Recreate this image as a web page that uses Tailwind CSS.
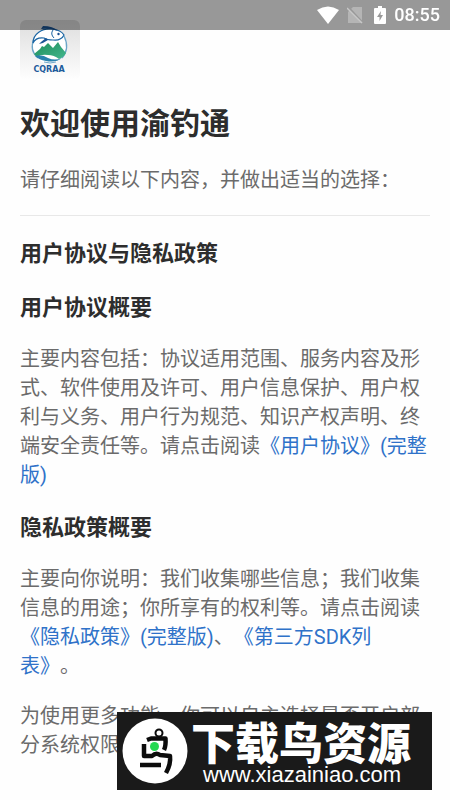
<!DOCTYPE html>
<html lang="zh-CN">
<head>
<meta charset="utf-8">
<meta name="viewport" content="width=device-width, initial-scale=1">
<title>渝钓通</title>
<script src="https://cdn.jsdelivr.net/npm/@tailwindcss/browser@4"></script>
</head>
<body class="min-h-screen bg-[#fefefe] font-[Roboto,'Noto_Sans_CJK_SC',sans-serif] text-[20px] leading-[29px] text-[#6b6b6b] [text-spacing-trim:space-all]">
<header class="fixed inset-x-0 top-0 z-10 flex h-[30px] items-center justify-end bg-black/40 pr-[10px] text-white">
  <svg class="mr-[8px] h-[18px] w-[22px]" viewBox="0 0 22 18" fill="currentColor" aria-hidden="true"><path d="M0 4Q11-3 22 4L11 18Z"/></svg>
  <svg class="mr-[11px] h-[18px] w-[16px]" viewBox="0 0 16 18" aria-hidden="true"><path d="M6 1h9v16H1V6Z" fill="#b5b5b5"/><path d="M1 1l14 15" stroke="#999" stroke-width="2"/><path d="M0 2l15 15" stroke="#c8c8c8" stroke-width="1.5"/></svg>
  <svg class="mr-[8px] h-[18px] w-[12px]" viewBox="0 0 12 18" aria-hidden="true"><path d="M4 0h4v2h3q1 0 1 1v14q0 1-1 1H1q-1 0-1-1V3q0-1 1-1h3Z" fill="currentColor"/><path d="M7 5L3 11h2.500v4L9 9H6.500Z" fill="#999"/></svg>
  <time class="text-[18px] leading-[30px] font-medium">08:55</time>
</header>
<main class="px-5 pt-5 pb-10">
  <svg class="size-[60px]" viewBox="0 0 60 60" role="img" aria-label="CQRAA">
    <defs>
      <linearGradient id="tile" x2="0" y2="1"><stop stop-color="#dedede"/><stop offset="1" stop-color="#fefefe"/></linearGradient>
      <linearGradient id="hill" x2="1" y2="1"><stop stop-color="#1e8d59"/><stop offset="1" stop-color="#42b68d"/></linearGradient>
    </defs>
    <rect width="60" height="60" rx="6" fill="url(#tile)"/>
    <circle cx="29.500" cy="26" r="17.500" fill="#fff"/>
    <path d="M14 19C11 26 12 33 18 38M44 16C48 24 47 32 42 38" fill="none" stroke="#6ba5c8" stroke-width="1.300"/>
    <path d="M14 34L20 29L22 26L24 27L28 23L33 28L38 22L41 27L46 33Q44 37 39 39Q34 35 28 35Q21 34 17 37Z" fill="url(#hill)"/>
    <path d="M15 36Q22 34 28 38Q35 41 42 38Q36 43 26 41Q19 40 15 36Z" fill="#2a82ae"/>
    <path d="M24 42Q30 44 36 42" fill="none" stroke="#6ba5c8"/>
    <path d="M13 23C13 14 22 8 32 9Q41 10 44 15Q41 21 33 20Q27 20 24 18Q16 17 13 23Z" fill="#fff" stroke="#1b65a3" stroke-width="1.200"/>
    <path d="M21 9L23 6Q33 6 38 11Q29 8 21 9ZM21 22L26 18L28 20Q24 23 19 24Z" fill="#1b5596"/>
    <path d="M33 10Q30 14 34 18" fill="none" stroke="#1b65a3"/>
    <circle cx="38.500" cy="14" r="1.200" fill="#1b4f8f"/>
    <text x="29" y="52" text-anchor="middle" font-family="DejaVu Sans" font-size="8" font-weight="bold" fill="#1d5b9b">CQRAA</text>
  </svg>
  <h1 class="mt-6 text-[30px] leading-[40px] font-bold text-[#2d2d2d]">欢迎使用渝钓通</h1>
  <p class="mt-[22px]">请仔细阅读以下内容，并做出适当的选择：</p>
  <hr class="mt-5 border-[#e8e8e8]">
  <section class="mt-[22px]">
    <h2 class="text-[22px] leading-8 font-bold text-[#2d2d2d]">用户协议与隐私政策</h2>
    <h3 class="mt-[22px] text-[22px] leading-8 font-bold text-[#2d2d2d]">用户协议概要</h3>
    <p class="mt-[21px]">主要内容包括：协议适用范围、服务内容及形式、软件使用及许可、用户信息保护、用户权利与义务、用户行为规范、知识产权声明、终端安全责任等。请点击阅读<a href="#" class="text-[#2f72c9]">《用户协议》(完整版)</a></p>
    <h3 class="mt-[22px] text-[22px] leading-8 font-bold text-[#2d2d2d]">隐私政策概要</h3>
    <p class="mt-[21px]">主要向你说明：我们收集哪些信息；我们收集信息的用途；你所享有的权利等。请点击阅读<a href="#" class="text-[#2f72c9]">《隐私政策》(完整版)</a>、<a href="#" class="text-[#2f72c9]">《第三方SDK列表》</a>。</p>
    <p class="mt-[21px]">为使用更多功能，你可以自主选择是否开启部分系统权限</p>
  </section>
</main>
<aside class="fixed right-[18px] bottom-[10px] flex h-[78px] w-[315px] items-center bg-[#1a1a1a] pl-[5px] text-white">
  <svg class="size-[66px] shrink-0" viewBox="0 0 66 66" aria-hidden="true">
    <circle cx="33" cy="33" r="32.500" fill="#fff"/>
    <g fill="none" stroke="#0c0c0c" stroke-width="4.500" stroke-linejoin="round">
      <circle cx="37" cy="15" r="3.500" stroke-width="2"/>
      <path d="M25 22L29 20.500H43.500Q44 28 42 32M22 26V38H30Q34 34 38 37L48 38Q49 46 44 55M18 47H39"/>
    </g>
    <circle cx="32.500" cy="28.500" r="4.500" fill="#25d852"/>
  </svg>
  <div class="ml-[3px] flex flex-col self-end pb-[3px]">
    <strong class="text-[44px] leading-[36px] font-black whitespace-nowrap">下载鸟资源</strong>
    <span class="ml-3 font-['Liberation_Sans',sans-serif] text-[22px] leading-6">www.xiazainiao.com</span>
  </div>
</aside>
</body>
</html>
